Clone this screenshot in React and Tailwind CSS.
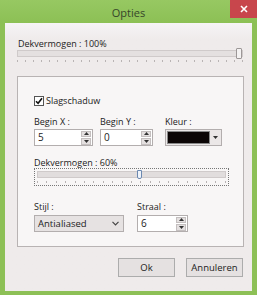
import React from "react";

function Ticks({ n, className }) {
  return (
    <div className={"flex justify-between " + className}>
      {Array.from({ length: n }).map((_, i) => (
        <div key={i} className="w-px h-[2px] bg-[#b9b4b4]" />
      ))}
    </div>
  );
}

function Spinner() {
  return (
    <div className="flex flex-col w-[10px] h-[14px] mr-[1px] gap-[1px]">
      <div className="flex-1 bg-[#e4e0e0] border border-[#c4bfbf] flex items-center justify-center">
        <svg width="5" height="3" viewBox="0 0 5 3"><path d="M0 3L2.5 0L5 3Z" fill="#333" /></svg>
      </div>
      <div className="flex-1 bg-[#e4e0e0] border border-[#c4bfbf] flex items-center justify-center">
        <svg width="5" height="3" viewBox="0 0 5 3"><path d="M0 0L2.5 3L5 0Z" fill="#333" /></svg>
      </div>
    </div>
  );
}

function NumInput({ value, w }) {
  return (
    <div className={"h-[17px] bg-white border border-[#b3aeae] flex items-center justify-between pl-[3px] " + w}>
      <span className="text-[10px] leading-[11px]">{value}</span>
      <Spinner />
    </div>
  );
}

export default function App() {
  return (
    <div
      className="w-[257px] h-[295px] bg-[#8dc056] flex flex-col text-[#222] overflow-hidden"
      style={{ fontFamily: '"Open Sans", "Noto Sans", sans-serif' }}
    >
      <div className="relative h-[23px] flex items-center justify-center bg-gradient-to-b from-[#97c862] to-[#8cc055]">
        <span className="text-[11px] text-[#36452a] leading-none pt-[1px]">Opties</span>
        <div className="absolute right-0 top-0 w-[27px] h-[18px] bg-[#c8464c] flex items-center justify-center">
          <svg width="8" height="8" viewBox="0 0 8 8">
            <path d="M1 1L7 7M7 1L1 7" stroke="#fff" strokeWidth="1.6" />
          </svg>
        </div>
      </div>
      <div className="mx-[5px] mb-[4px] flex-1 bg-gradient-to-b from-[#f6f4f6] to-[#efebeb] from-[0%] to-[6%] flex flex-col text-[9px] leading-[11px]">
        <div className="mt-[15px] ml-[13px]">Dekvermogen : 100%</div>
        <div className="relative ml-[12px] mr-[9px] mt-[1px] h-[7px] bg-[#e4e0e0] border border-[#cfcaca]">
          <div className="absolute right-[0px] top-[-3px] w-[6px] h-[11px] bg-[#f4f2f2] border border-[#9c9797] rounded-[1px]" />
        </div>
        <Ticks n={29} className="ml-[12px] mr-[9px] mt-[3px]" />
        <div className="mt-[14px] ml-[12px] mr-[8px] h-[171px] bg-[#f8f6f6] border border-[#b8b3b3] flex flex-col pl-[16px]">
          <div className="mt-[18px] flex items-center gap-[2px]">
            <div className="w-[10px] h-[10px] bg-white border border-[#555] flex items-center justify-center">
              <svg width="8" height="8" viewBox="0 0 8 8">
                <path d="M1 4.2L3.1 6.3L7 1.3" stroke="#111" strokeWidth="1.6" fill="none" />
              </svg>
            </div>
            <span>Slagschaduw</span>
          </div>
          <div className="mt-[10px] flex">
            <div className="flex flex-col w-[66px]">
              <span className="mb-[2px]">Begin X :</span>
              <NumInput value="5" w="w-[59px]" />
            </div>
            <div className="flex flex-col w-[65px]">
              <span className="mb-[2px]">Begin Y :</span>
              <NumInput value="0" w="w-[53px]" />
            </div>
            <div className="flex flex-col">
              <span className="mb-[2px]">Kleur :</span>
              <div className="w-[57px] h-[17px] bg-[#ebe7e7] border border-[#b3aeae] flex items-center pl-[1px]">
                <div className="w-[43px] h-[13px] bg-[#0c0606] border border-[#888]" />
                <div className="flex-1 flex items-center justify-center">
                  <svg width="5" height="3" viewBox="0 0 5 3"><path d="M0 0L2.5 3L5 0Z" fill="#333" /></svg>
                </div>
              </div>
            </div>
          </div>
          <div className="mt-[11px]">Dekvermogen : 60%</div>
          <div className="mt-[0px] mr-[14px] h-[18px] border border-dotted border-[#777] flex flex-col px-[2px] pt-[2px]">
            <div className="relative h-[7px] bg-[#e1dddd] border border-[#cfcaca]">
              <div className="absolute left-[99px] top-[-2px] w-[5px] h-[9px] bg-[#eef3fa] border border-[#6b88b0] rounded-b-[2px]" />
            </div>
            <Ticks n={21} className="mt-[3px]" />
          </div>
          <div className="mt-[15px] flex">
            <div className="flex flex-col w-[103px]">
              <span className="mb-[3px]">Stijl :</span>
              <div className="w-[90px] h-[17px] bg-[#e6e2e2] border border-[#b3aeae] flex items-center justify-between pl-[3px] pr-[3px]">
                <span className="text-[9.5px]">Antialiased</span>
                <svg width="7" height="5" viewBox="0 0 7 5" className="mr-[1px]">
                  <path d="M0.5 0.8L3.5 3.8L6.5 0.8" stroke="#444" strokeWidth="1.2" fill="none" />
                </svg>
              </div>
            </div>
            <div className="flex flex-col">
              <span className="mb-[3px]">Straal :</span>
              <NumInput value="6" w="w-[51px]" />
            </div>
          </div>
        </div>
        <div className="mt-[11px] mr-[9px] flex justify-end gap-[11px]">
          <div className="w-[57px] h-[19px] bg-[#e5e1e1] border border-[#acacac] flex items-center justify-center text-[9.5px]">Ok</div>
          <div className="w-[57px] h-[19px] bg-[#e5e1e1] border border-[#acacac] flex items-center justify-center text-[9.5px]">Annuleren</div>
        </div>
      </div>
    </div>
  );
}
